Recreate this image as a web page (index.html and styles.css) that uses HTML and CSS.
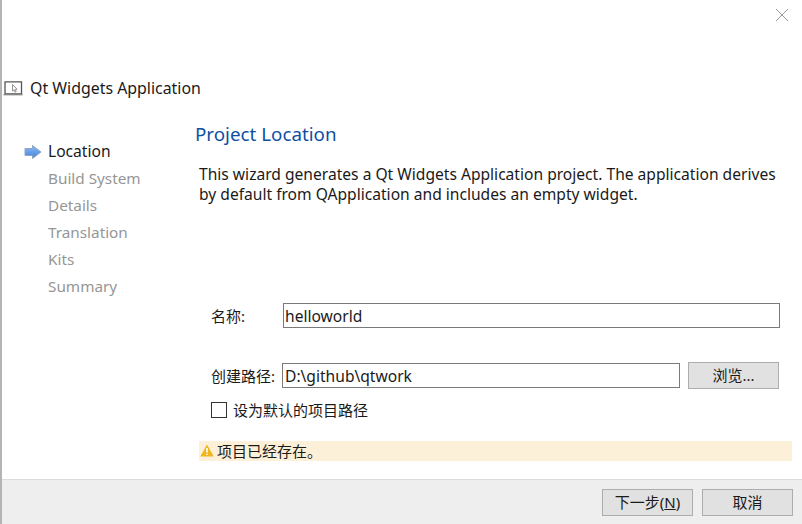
FILE: index.html
```html
<!DOCTYPE html>
<html lang="zh-CN">
<head>
    <meta charset="UTF-8">
    <title>Qt Widgets Application</title>
    <link rel="stylesheet" href="styles.css">
</head>
<body>
    <div class="window">
        <div class="topbar">
            <svg class="close-icon" width="14" height="14" viewBox="0 0 14 14">
                <path d="M1 1L13 13M13 1L1 13" stroke="#999" stroke-width="1" fill="none"/>
            </svg>
        </div>

        <div class="wizard-title">
            <svg class="app-icon" width="20" height="15" viewBox="0 0 20 15">
                <path d="M2 0.8H18.5V13H2Z" fill="#fff" stroke="#555" stroke-width="1.3"/>
                <path d="M0.5 13.7H19.5" stroke="#888" stroke-width="1.3"/>
                <path d="M9.5 3.5V10L11 8.8L12 11.2L13.2 10.6L12.2 8.4L14 8.2Z" fill="#fff" stroke="#777" stroke-width="0.8"/>
            </svg>
            <span class="wizard-name">Qt Widgets Application</span>
        </div>

        <div class="main">
            <ul class="steps">
                <li class="step active">
                    <svg class="step-arrow" width="18" height="14" viewBox="0 0 18 14">
                        <defs>
                            <linearGradient id="arrow-fill" x1="0" y1="0" x2="0" y2="1">
                                <stop offset="0" stop-color="#8dbdf7"/>
                                <stop offset="1" stop-color="#3f7fdc"/>
                            </linearGradient>
                        </defs>
                        <path d="M1 3.5H8.5V0.5L17 7L8.5 13.5V10.5H1Z" fill="url(#arrow-fill)" stroke="#8fa3bd" stroke-width="1"/>
                    </svg>
                    Location
                </li>
                <li class="step">Build System</li>
                <li class="step">Details</li>
                <li class="step">Translation</li>
                <li class="step">Kits</li>
                <li class="step">Summary</li>
            </ul>

            <div class="content">
                <h2 class="page-title">Project Location</h2>
                <p class="intro">This wizard generates a Qt Widgets Application project. The application derives by default from QApplication and includes an empty widget.</p>

                <div class="form">
                    <div class="row name-row">
                        <label class="field-label">名称:</label>
                        <input class="text-input" type="text" value="helloworld">
                    </div>
                    <div class="row path-row">
                        <label class="field-label">创建路径:</label>
                        <input class="text-input" type="text" value="D:\github\qtwork">
                        <button class="btn browse-btn">浏览...</button>
                    </div>
                    <div class="check-row">
                        <span class="checkbox"></span>
                        <span>设为默认的项目路径</span>
                    </div>
                </div>

                <div class="warning">
                    <svg width="14" height="13" viewBox="0 0 14 13">
                        <path d="M7 0.5L13.7 12.5H0.3Z" fill="#f0b41e"/>
                        <path d="M7 4V8.5M7 9.7V11" stroke="#fff" stroke-width="1.6"/>
                    </svg>
                    <span>项目已经存在。</span>
                </div>
            </div>
        </div>

        <div class="footer">
            <button class="btn">下一步(<u>N</u>)</button>
            <button class="btn">取消</button>
        </div>
    </div>
</body>
</html>
```

FILE: styles.css
```css
* {
    box-sizing: border-box;
}

body {
    margin: 0;
    background-color: #fff;
    color: #1a1a1a;
    font-family: "Noto Sans", "Noto Sans CJK SC", sans-serif;
    font-size: 15.6px;
}

.window {
    width: 802px;
    height: 524px;
    display: flex;
    flex-direction: column;
    border-left: 2px solid #b4b4b4;
    overflow: hidden;
}

.topbar {
    height: 76px;
    flex-shrink: 0;
    display: flex;
    justify-content: flex-end;
    padding: 8px 13px 0 0;
}

.wizard-title {
    height: 24px;
    flex-shrink: 0;
    display: flex;
    align-items: center;
    gap: 7px;
    padding-left: 1px;
}

.wizard-name {
    font-size: 15.9px;
}

.main {
    flex: 1;
    display: flex;
}

.steps {
    width: 193px;
    flex-shrink: 0;
    margin: 0;
    padding: 38px 0 0 46px;
    list-style: none;
}

.step {
    position: relative;
    height: 27px;
    line-height: 27px;
    font-size: 15.3px;
    color: #969696;
}

.step.active {
    font-size: 15.6px;
    color: #1a1a1a;
}

.step-arrow {
    position: absolute;
    left: -24px;
    top: 7px;
}

.content {
    flex: 1;
    padding-right: 20px;
}

.page-title {
    margin: 19px 0 0;
    height: 30px;
    line-height: 30px;
    font-size: 18.8px;
    font-weight: normal;
    color: #0e4fa3;
}

.intro {
    margin: 15px 0 0 4px;
    width: 590px;
    line-height: 20px;
}

.form {
    margin-top: 99px;
    margin-right: 12px;
    padding-left: 16px;
}

.row {
    display: flex;
    align-items: center;
}

.field-label {
    width: 71px;
    flex-shrink: 0;
    font-size: 15px;
}

.text-input {
    flex: 1;
    min-width: 0;
    height: 25px;
    padding: 0 1px;
    border: 1px solid #7a7a7a;
    background-color: #fff;
    color: #1a1a1a;
    font-family: inherit;
    font-size: 15.6px;
    outline: none;
}

.name-row {
    height: 25px;
}

.name-row .field-label {
    width: 72px;
}

.path-row {
    margin-top: 34px;
    height: 27px;
}

.path-row .text-input {
    padding-left: 2px;
}

.btn {
    width: 91px;
    height: 27px;
    padding: 0 0 2px;
    border: 1px solid #adadad;
    background-color: #e1e1e1;
    color: #1a1a1a;
    font-family: inherit;
    font-size: 15px;
}

.browse-btn {
    margin-left: 8px;
    margin-right: 1px;
}

.check-row {
    margin-top: 10px;
    display: flex;
    align-items: center;
    gap: 6px;
    font-size: 15px;
}

.checkbox {
    width: 16px;
    height: 16px;
    border: 1px solid #333;
    background-color: #fff;
}

.warning {
    margin: 21px 0 0 4px;
    width: 593px;
    height: 20px;
    display: flex;
    align-items: center;
    gap: 3px;
    padding: 0 0 2px 1px;
    background-color: #fcf1d8;
    font-size: 15px;
}

.footer {
    height: 45px;
    flex-shrink: 0;
    display: flex;
    justify-content: flex-end;
    gap: 9px;
    padding: 9px 9px 0 0;
    border-top: 1px solid #dcdcdc;
    background-color: #eeeeee;
}
```
